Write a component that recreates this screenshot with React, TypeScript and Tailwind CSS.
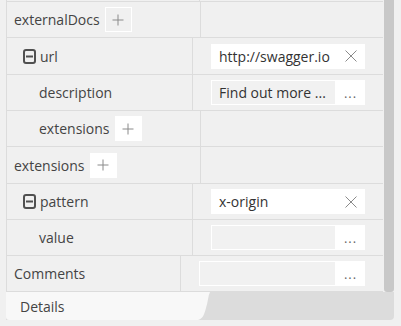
import React from 'react';

type RowProps = {
  label: string;
  indent?: boolean;
  toggle?: boolean;
  plus?: 'outline' | 'solid';
  left: string;
  height: string;
  children?: React.ReactNode;
};

const MinusBox = () => (
  <svg width="13" height="15" viewBox="0 0 13 15" className="shrink-0">
    <rect x="1" y="1" width="11" height="13" rx="2" fill="none" stroke="#505050" strokeWidth="2" />
    <line x1="3" y1="7.5" x2="10" y2="7.5" stroke="#505050" strokeWidth="2" />
  </svg>
);

const PlusButton = ({ kind }: { kind: 'outline' | 'solid' }) => (
  <span
    className={`ml-[5px] flex h-[25px] w-[27px] items-center justify-center ${
      kind === 'outline' ? 'border border-white bg-[#f0f0f0]' : 'bg-white'
    }`}
  >
    <svg width="12" height="12" viewBox="0 0 12 12">
      <line x1="6" y1="0.5" x2="6" y2="11.5" stroke="#8a8a8a" strokeWidth="1" />
      <line x1="0.5" y1="6" x2="11.5" y2="6" stroke="#8a8a8a" strokeWidth="1" />
    </svg>
  </span>
);

const Clear = () => (
  <svg width="12" height="12" viewBox="0 0 12 12" className="shrink-0">
    <line x1="0.5" y1="0.5" x2="11.5" y2="11.5" stroke="#8a8a8a" strokeWidth="1" />
    <line x1="11.5" y1="0.5" x2="0.5" y2="11.5" stroke="#8a8a8a" strokeWidth="1" />
  </svg>
);

const TextInput = ({ value }: { value: string }) => (
  <div className="flex h-[25px] w-[154px] items-center justify-between bg-white pl-[8px] pr-[8px] text-[14px] text-[#333]">
    <span>{value}</span>
    <Clear />
  </div>
);

const DotsInput = ({ value, width }: { value?: string; width: string }) => (
  <div className={`flex h-[25px] ${width}`}>
    <div className="flex min-w-0 flex-1 items-center border border-white bg-[#f1f1f1] pl-[7px] text-[14px] text-[#333]">
      <span className="truncate">{value}</span>
    </div>
    <div className="flex w-[29px] items-center justify-center bg-white pt-[2px] text-[13px] leading-none tracking-[1px] text-[#666]">
      ...
    </div>
  </div>
);

const Row = ({ label, indent, toggle, plus, left, height, children }: RowProps) => (
  <div className={`flex ${height} border-b border-[#dcdcdc]`}>
    <div
      className={`flex ${left} shrink-0 items-center border-r border-[#dcdcdc] ${
        toggle ? 'pl-[16px]' : indent ? 'pl-[32px]' : 'pl-[7px]'
      }`}
    >
      {toggle && <MinusBox />}
      <span className={toggle ? 'ml-[4px]' : ''}>{label}</span>
      {plus && <PlusButton kind={plus} />}
    </div>
    <div className="flex flex-1 items-center justify-end pr-[18px]">{children}</div>
  </div>
);

export default function App() {
  return (
    <div
      className="h-[326px] w-[401px] overflow-hidden bg-[#f0f0f0] pl-[6px] text-[14px] text-[#444]"
      style={{ fontFamily: '"Open Sans", "Noto Sans", sans-serif' }}
    >
      <div className="flex w-[388px]">
        <div className="w-[378px] border-l border-[#dcdcdc]">
          <div className="flex h-[2px] border-b border-[#dcdcdc]">
            <div className="w-[193px] border-r border-[#dcdcdc]" />
          </div>
          <Row label="externalDocs" plus="outline" left="w-[194px]" height="h-[36px]" />
          <Row label="url" toggle left="w-[186px]" height="h-[37px]">
            <TextInput value="http://swagger.io" />
          </Row>
          <Row label="description" indent left="w-[186px]" height="h-[36px]">
            <DotsInput value="Find out more ..." width="w-[154px]" />
          </Row>
          <Row label="extensions" indent plus="solid" left="w-[194px]" height="h-[36px]" />
          <Row label="extensions" plus="solid" left="w-[194px]" height="h-[37px]" />
          <Row label="pattern" toggle left="w-[186px]" height="h-[36px]">
            <TextInput value="x-origin" />
          </Row>
          <Row label="value" indent left="w-[186px]" height="h-[36px]">
            <DotsInput width="w-[154px]" />
          </Row>
          <Row label="Comments" left="w-[174px]" height="h-[36px]">
            <DotsInput width="w-[166px]" />
          </Row>
        </div>
        <div className="ml-[1px] w-[10px] rounded-b-[3px] bg-[#c8c8c8]" />
      </div>
      <div className="flex h-[28px] w-[388px] rounded-br-[4px] bg-[#dcdcdc]">
        <div className="flex w-[192px] items-center rounded-bl-[3px] bg-[#f8f8f8] pl-[14px] text-[#444]">
          Details
        </div>
        <svg width="14" height="28" viewBox="0 0 14 28" className="shrink-0">
          <path d="M0 0 H12 C10 4 10 10 8 16 C6 24 4 27 0 28 Z" fill="#f8f8f8" />
        </svg>
      </div>
    </div>
  );
}
